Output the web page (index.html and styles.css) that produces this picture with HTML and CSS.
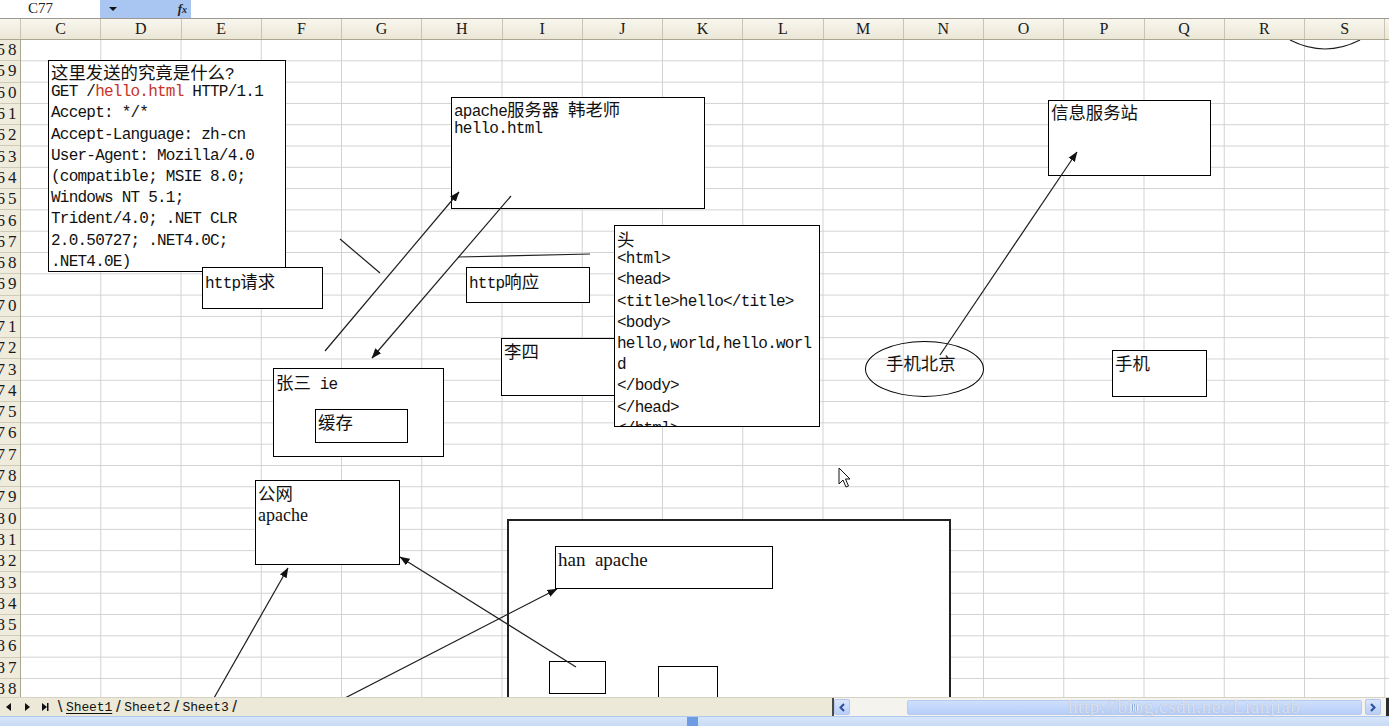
FILE: index.html
```html
<!DOCTYPE html>
<html lang="zh-CN">
<head>
<meta charset="utf-8">
<title>Excel - 草图</title>
<link rel="stylesheet" href="styles.css">
</head>
<body>
<div class="app">
  <div class="formula-bar">
    <div class="name-box">C77</div>
    <div class="fx-area">
      <svg class="dd" width="8" height="5" viewBox="0 0 8 5"><path d="M0 0 H8 L4 4 Z" fill="#111"/></svg>
      <span class="fx">f<span class="fx-x">x</span></span>
    </div>
    <div class="formula-input"></div>
  </div>

  <div class="col-headers">
    <div class="corner"></div>
    <div class="ch">C</div><div class="ch">D</div><div class="ch">E</div><div class="ch">F</div>
    <div class="ch">G</div><div class="ch">H</div><div class="ch">I</div><div class="ch">J</div>
    <div class="ch">K</div><div class="ch">L</div><div class="ch">M</div><div class="ch">N</div>
    <div class="ch">O</div><div class="ch">P</div><div class="ch">Q</div><div class="ch">R</div>
    <div class="ch">S</div><div class="ch">T</div>
  </div>

  <div class="sheet-body">
    <div class="row-headers">
      <div class="rh"><span>58</span></div><div class="rh"><span>59</span></div><div class="rh"><span>60</span></div><div class="rh"><span>61</span></div>
      <div class="rh"><span>62</span></div><div class="rh"><span>63</span></div><div class="rh"><span>64</span></div><div class="rh"><span>65</span></div>
      <div class="rh"><span>66</span></div><div class="rh"><span>67</span></div><div class="rh"><span>68</span></div><div class="rh"><span>69</span></div>
      <div class="rh"><span>70</span></div><div class="rh"><span>71</span></div><div class="rh"><span>72</span></div><div class="rh"><span>73</span></div>
      <div class="rh"><span>74</span></div><div class="rh"><span>75</span></div><div class="rh"><span>76</span></div><div class="rh"><span>77</span></div>
      <div class="rh"><span>78</span></div><div class="rh"><span>79</span></div><div class="rh"><span>80</span></div><div class="rh"><span>81</span></div>
      <div class="rh"><span>82</span></div><div class="rh"><span>83</span></div><div class="rh"><span>84</span></div><div class="rh"><span>85</span></div>
      <div class="rh"><span>86</span></div><div class="rh"><span>87</span></div><div class="rh"><span>88</span></div>
    </div>

    <div class="canvas">
      <div class="shape b-req">
        <div class="ln"><span class="cj">这里发送的究竟是什么</span>?</div>
        <div class="ln">GET /<span class="red">hello.html</span> HTTP/1.1</div>
        <div class="ln">Accept: */*</div>
        <div class="ln">Accept-Language: zh-cn</div>
        <div class="ln">User-Agent: Mozilla/4.0</div>
        <div class="ln">(compatible; MSIE 8.0;</div>
        <div class="ln">Windows NT 5.1;</div>
        <div class="ln">Trident/4.0; .NET CLR</div>
        <div class="ln">2.0.50727; .NET4.0C;</div>
        <div class="ln">.NET4.0E)</div>
      </div>
      <div class="shape b-qiu"><div class="ln">http<span class="cj">请求</span></div></div>

      <div class="shape b-server">
        <div class="ln">apache<span class="cj">服务器</span> <span class="cj">韩老师</span></div>
        <div class="ln">hello.html</div>
      </div>
      <div class="shape b-resp"><div class="ln">http<span class="cj">响应</span></div></div>

      <div class="shape b-lisi"><div class="ln"><span class="cj">李四</span></div></div>
      <div class="shape b-html">
        <div class="ln"><span class="cj">头</span></div>
        <div class="ln">&lt;html&gt;</div>
        <div class="ln">&lt;head&gt;</div>
        <div class="ln">&lt;title&gt;hello&lt;/title&gt;</div>
        <div class="ln">&lt;body&gt;</div>
        <div class="ln">hello,world,hello.worl</div>
        <div class="ln">d</div>
        <div class="ln">&lt;/body&gt;</div>
        <div class="ln">&lt;/head&gt;</div>
        <div class="ln">&lt;/html&gt;</div>
      </div>

      <div class="shape b-zhang"><div class="ln"><span class="cj">张三</span> ie</div></div>
      <div class="shape b-cache"><div class="ln"><span class="cj">缓存</span></div></div>

      <div class="shape b-gongwang">
        <div class="ln"><span class="cj">公网</span></div>
        <div class="ln serif">apache</div>
      </div>

      <div class="shape b-lan"></div>
      <div class="shape b-han"><div class="ln serif">han&nbsp; apache</div></div>
      <div class="shape b-s1"></div>
      <div class="shape b-s2"></div>

      <div class="shape b-info"><div class="ln"><span class="cj">信息服务站</span></div></div>
      <div class="shape b-phone"><div class="ln"><span class="cj">手机</span></div></div>
      <div class="shape e-bj"><span class="cj">手机北京</span></div>

      <svg class="connectors" width="1368" height="657" viewBox="0 0 1368 657">
        <defs>
          <marker id="ah" viewBox="0 0 10 10" refX="9.5" refY="5" markerWidth="10" markerHeight="10" markerUnits="userSpaceOnUse" orient="auto">
            <path d="M0 1.2 L10 5 L0 8.8 Z" fill="#111"/>
          </marker>
        </defs>
        <g stroke="#1e1e1e" stroke-width="1.2" fill="none">
          <line x1="304" y1="311" x2="438" y2="152" marker-end="url(#ah)"/>
          <line x1="490" y1="156" x2="351" y2="318" marker-end="url(#ah)"/>
          <line x1="319" y1="199" x2="359" y2="233"/>
          <line x1="437" y1="217" x2="569" y2="214"/>
          <line x1="919" y1="315" x2="1056" y2="112" marker-end="url(#ah)"/>
          <line x1="193" y1="658" x2="267" y2="528" marker-end="url(#ah)"/>
          <line x1="555" y1="627" x2="379" y2="517" marker-end="url(#ah)"/>
          <line x1="324" y1="658" x2="536" y2="549" marker-end="url(#ah)"/>
          <path d="M1269 0 Q1304 18 1339 0"/>
        </g>
      </svg>

      <svg class="cursor" width="13" height="22" viewBox="0 0 13 22">
        <path d="M1 1 L1 17 L5 13 L8 20 L10.5 19 L7.5 12 L12 12 Z" fill="#fff" stroke="#111" stroke-width="1" stroke-linejoin="miter"/>
      </svg>
    </div>
  </div>

  <div class="tabbar">
    <div class="tab-nav">
      <svg width="52" height="10" viewBox="0 0 52 10">
        <path d="M10 1 L5 5 L10 9 Z" fill="#111"/>
        <path d="M24 1 L29 5 L24 9 Z" fill="#111"/>
        <path d="M41 1 L46 5 L41 9 Z" fill="#111"/>
        <rect x="46" y="1" width="1.5" height="8" fill="#111"/>
      </svg>
    </div>
    <div class="tabs">
      <span class="slant">\</span><span class="tab active">Sheet1</span><span class="slant">/</span><span class="tab">Sheet2</span><span class="slant">/</span><span class="tab">Sheet3</span><span class="slant">/</span>
    </div>
    <div class="hscroll">
      <div class="sb-btn"><svg width="8" height="9" viewBox="0 0 8 9"><path d="M6 1 L2.5 4.5 L6 8" stroke="#2b4f9c" stroke-width="2" fill="none"/></svg></div>
      <div class="sb-track">
        <div class="sb-thumb"><span class="grip"></span></div>
      </div>
      <div class="sb-btn"><svg width="8" height="9" viewBox="0 0 8 9"><path d="M2 1 L5.5 4.5 L2 8" stroke="#2b4f9c" stroke-width="2" fill="none"/></svg></div>
      <div class="sb-end"></div>
    </div>
    <div class="watermark">http://blog.csdn.net/Lianjiab</div>
  </div>

  <div class="taskstrip">
    <span class="strip-mark"></span>
  </div>
</div>
</body>
</html>
```

FILE: styles.css
```css
* { box-sizing: border-box; }

html, body {
  margin: 0;
  padding: 0;
}

body {
  width: 1389px;
  height: 726px;
  overflow: hidden;
  background: #fff;
  font-family: "Liberation Mono", "Noto Sans CJK SC", monospace;
  color: #111;
}

.app {
  display: flex;
  flex-direction: column;
  height: 726px;
}

/* ---------- formula bar ---------- */
.formula-bar {
  flex: none;
  display: flex;
  height: 19px;
  border-bottom: 1px solid #9c9a90;
  background: #fff;
}

.name-box {
  width: 100px;
  padding-left: 28px;
  font-family: "Liberation Serif", serif;
  font-size: 15px;
  line-height: 17px;
  color: #222;
}

.fx-area {
  width: 91px;
  background: #a9c6f3;
  display: flex;
  align-items: center;
  justify-content: space-between;
  padding: 0 4px 0 9px;
}

.fx {
  font-family: "Liberation Serif", serif;
  font-style: italic;
  font-weight: bold;
  font-size: 13px;
  line-height: 13px;
  color: #222;
}

.fx-x { font-size: 10px; }

.formula-input { flex: 1; }

/* ---------- column headers ---------- */
.col-headers {
  flex: none;
  display: grid;
  grid-template-columns: 21px repeat(18, 80.25px);
  height: 21px;
  overflow: hidden;
  background: linear-gradient(#f8f6ee, #ebe7d7);
  border-bottom: 1px solid #aaa692;
}

.corner,
.ch {
  border-right: 1px solid #c8c4b1;
}

.ch {
  text-align: center;
  font-family: "Liberation Serif", serif;
  font-size: 16px;
  line-height: 20px;
  color: #1a1a1a;
}

/* ---------- sheet body ---------- */
.sheet-body {
  flex: 1;
  display: flex;
  min-height: 0;
}

.row-headers {
  flex: none;
  width: 21px;
  overflow: hidden;
  background: #efebdd;
  border-right: 1px solid #aaa692;
}

.rh {
  width: 20px;
  height: 21.3px;
  border-bottom: 1px solid #cfcbb9;
  display: flex;
  justify-content: flex-start;
  align-items: center;
  overflow: hidden;
}

.rh span {
  flex: none;
  width: 46px;
  margin-left: -15px;
  text-align: center;
  font-family: "Liberation Serif", serif;
  font-size: 17px;
  letter-spacing: 3px;
  white-space: nowrap;
  color: #1a1a1a;
}

.canvas {
  position: relative;
  flex: 1;
  overflow: hidden;
  background-color: #fff;
  background-image:
    linear-gradient(to right, transparent calc(100% - 1px), #d2d2d2 calc(100% - 1px)),
    linear-gradient(to bottom, transparent calc(100% - 1px), #d2d2d2 calc(100% - 1px));
  background-size: 80.25px 100%, 100% 21.3px;
}

/* ---------- drawing shapes ---------- */
.shape {
  position: absolute;
  background: #fff;
  border: 1px solid #000;
  overflow: hidden;
  padding: 0 2px;
  font-family: "Liberation Mono", "Noto Sans CJK SC", monospace;
  font-size: 16px;
  letter-spacing: -0.77px;
  line-height: 21.2px;
  white-space: nowrap;
  color: #111;
}

.ln {
  height: 21.2px;
  line-height: 21.2px;
}

.cj {
  font-family: "Noto Sans CJK SC", sans-serif;
  font-size: 17.4px;
  letter-spacing: 0;
}

.red { color: #c8342c; }

.serif {
  font-family: "Liberation Serif", serif;
  font-size: 18px;
  letter-spacing: 0;
}

.b-req      { left: 27px;   top: 20px;  width: 238px; height: 212px; z-index: 1; }
.b-qiu      { left: 181px;  top: 227px; width: 121px; height: 42px;  z-index: 2; padding-top: 2px; }
.b-server   { left: 430px;  top: 57px;  width: 254px; height: 112px; }
.b-resp     { left: 445px;  top: 227px; width: 124px; height: 36px;  padding-top: 2px; }
.b-lisi     { left: 480px;  top: 298px; width: 120px; height: 58px;  padding-top: 1px; }
.b-html     { left: 593px;  top: 185px; width: 206px; height: 202px; z-index: 2; padding-top: 2px; }
.b-zhang    { left: 252px;  top: 328px; width: 171px; height: 89px;  padding-top: 2px; }
.b-cache    { left: 294px;  top: 369px; width: 93px;  height: 34px;  padding-top: 1px; z-index: 2; }
.b-gongwang { left: 234px;  top: 440px; width: 145px; height: 85px;  padding-top: 1px; }
.b-gongwang .serif { height: 24px; line-height: 24px; }
.b-lan      { left: 486px;  top: 479px; width: 444px; height: 230px; border-width: 2px; border-color: #222; }
.b-han      { left: 534px;  top: 506px; width: 218px; height: 43px;  padding-top: 2px; z-index: 2; }
.b-han .serif { font-size: 19px; }
.b-s1       { left: 528px;  top: 621px; width: 57px;  height: 33px;  z-index: 2; }
.b-s2       { left: 637px;  top: 626px; width: 60px;  height: 60px;  z-index: 2; }
.b-info     { left: 1027px; top: 60px;  width: 163px; height: 76px; }
.b-phone    { left: 1091px; top: 310px; width: 95px;  height: 47px;  padding-top: 1px; }

.e-bj {
  left: 844px;
  top: 301px;
  width: 119px;
  height: 56px;
  border-radius: 50%;
  padding: 8px 0 0 20px;
  line-height: 26px;
  background: transparent;
}

.connectors {
  position: absolute;
  left: 0;
  top: 0;
  z-index: 5;
  pointer-events: none;
}

.cursor {
  position: absolute;
  left: 817px;
  top: 427px;
  z-index: 6;
}

/* ---------- sheet tabs + horizontal scrollbar ---------- */
.tabbar {
  flex: none;
  position: relative;
  display: flex;
  align-items: center;
  height: 19px;
  background: #ece9d8;
  border-top: 1px solid #d6d3c4;
}

.tab-nav {
  width: 56px;
  padding-left: 1px;
  display: flex;
  align-items: center;
}

.tabs {
  flex: 1;
  display: flex;
  align-items: center;
  font-size: 13px;
  letter-spacing: -0.1px;
  color: #111;
  height: 100%;
}

.slant {
  font-family: "Liberation Sans", sans-serif;
  font-size: 17px;
  width: 8px;
  text-align: center;
  color: #222;
}

.tab {
  padding: 0 2px;
}

.tab.active {
  text-decoration: underline;
  text-underline-offset: 2px;
}

.hscroll {
  width: 557px;
  height: 100%;
  display: flex;
  align-items: center;
  border-left: 2px solid #4a4a4a;
  background: #f4f3ee;
}

.sb-btn {
  width: 16px;
  height: 16px;
  display: flex;
  align-items: center;
  justify-content: center;
  background: linear-gradient(#dae6fe, #b9cdf6);
  border: 1px solid #b3c6ec;
  border-radius: 2px;
}

.sb-track {
  flex: 1;
  height: 100%;
  display: flex;
  align-items: center;
  padding: 0 3px 0 57px;
}

.sb-thumb {
  flex: 1;
  height: 15px;
  display: flex;
  align-items: center;
  justify-content: center;
  background: linear-gradient(#cfe0fd, #b7cdf8);
  border: 1px solid #b7cbf1;
  border-radius: 2px;
}

.grip {
  width: 7px;
  height: 7px;
  background: repeating-linear-gradient(to right, #eef4ff 0 1px, #8ea9dc 1px 2px);
}

.sb-end {
  width: 8px;
  height: 100%;
  border-right: 3px solid #2b2b2b;
}

.watermark {
  position: absolute;
  left: 1068px;
  top: 0;
  font-family: "Liberation Serif", serif;
  font-size: 19px;
  line-height: 17px;
  letter-spacing: 0.6px;
  color: rgba(235, 240, 248, 0.75);
  text-shadow: 0 0 1px rgba(110, 120, 140, 0.45);
  pointer-events: none;
}

/* ---------- bottom strip ---------- */
.taskstrip {
  flex: none;
  position: relative;
  height: 10px;
  background: linear-gradient(#d7e6fa, #c8dbf6);
  border-top: 1px solid #b0c8ee;
}

.strip-mark {
  position: absolute;
  left: 687px;
  top: 0;
  width: 11px;
  height: 10px;
  background: #6f9be3;
}
```
